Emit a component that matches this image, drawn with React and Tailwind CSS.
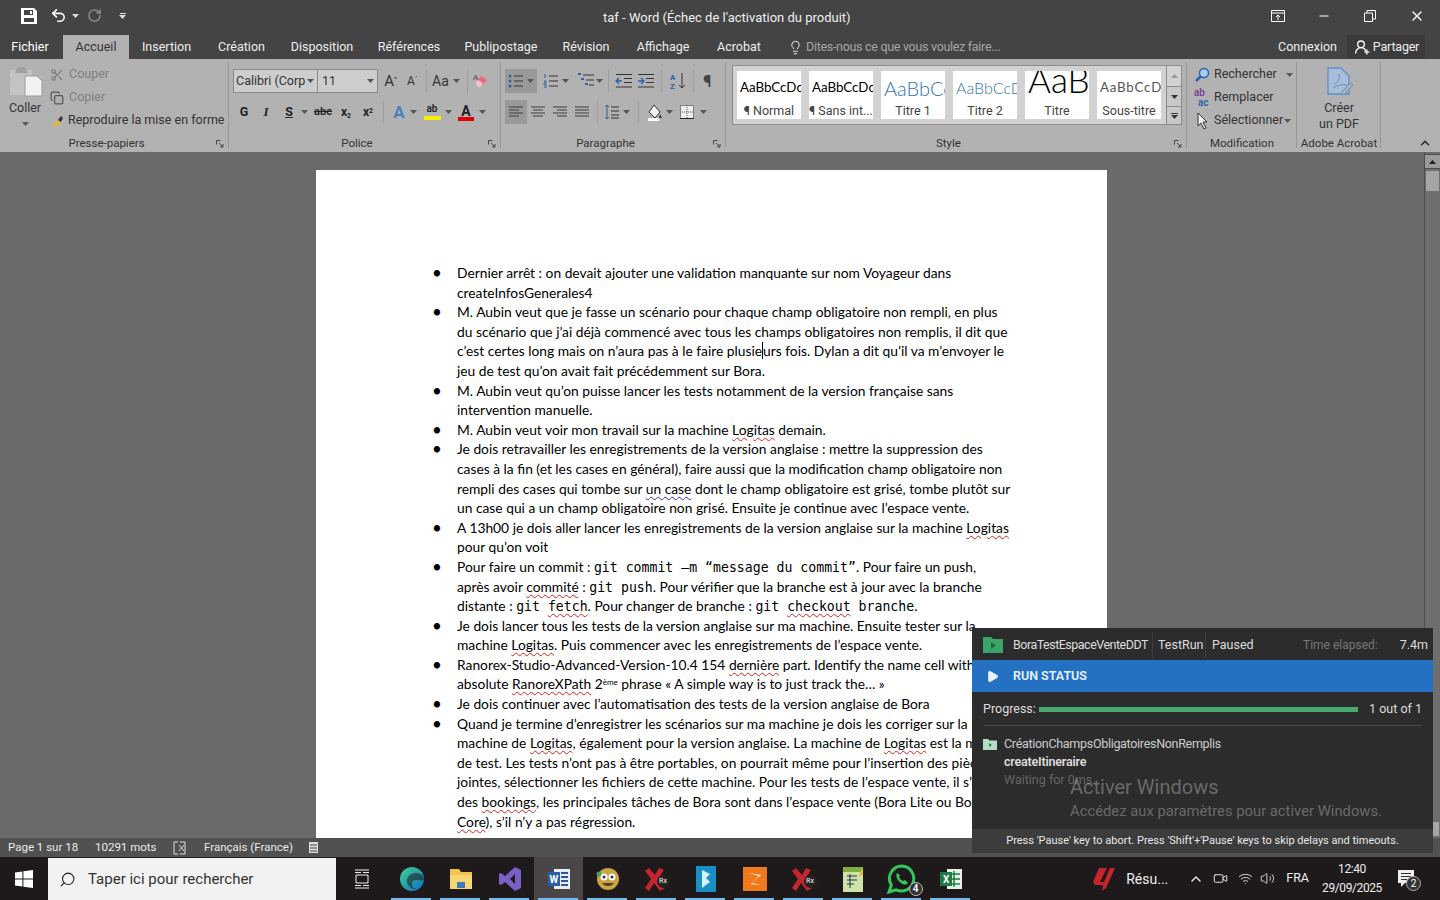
import React from "react";
import { Undo2, RotateCw, Scissors, Copy, Lightbulb, ChevronUp, Play, Search, Volume2, Wifi, Video, X as XIcon, Minus, UserRound, Plus } from "lucide-react";

const Caret = ({ c = "#555", className = "" }) => (
  <svg width="7" height="4" viewBox="0 0 7 4" className={className}><path d="M0 0h7L3.5 4z" fill={c} /></svg>
);
const Sep = ({ className = "" }) => <div className={"w-px h-[22px] bg-[#9c9c9c] " + className} />;

const Lines = ({ ys, stroke = "#3d3d3d", x1 = 1, x2 = 15 }) => (
  <svg width="16" height="16" viewBox="0 0 16 16">
    {ys.map((y, i) => <path key={i} d={`M${y[1] ?? x1} ${y[0]}H${y[2] ?? x2}`} stroke={stroke} strokeWidth="1" />)}
  </svg>
);

const Spell = ({ children, blue }) => (
  <span className={"underline decoration-wavy decoration-1 underline-offset-2 " + (blue ? "decoration-[#2a2ad0]" : "decoration-[#d81e1e]")}>{children}</span>
);
const Mono = ({ children }) => <span className="font-['DejaVu_Sans_Mono',monospace] text-[13.2px]">{children}</span>;

const items = [
  ["Dernier arrêt : on devait ajouter une validation manquante sur nom Voyageur dans", "createInfosGenerales4"],
  ["M. Aubin veut que je fasse un scénario pour chaque champ obligatoire non rempli, en plus", "du scénario que j’ai déjà commencé avec tous les champs obligatoires non remplis, il dit que", <>c’est certes long mais on n’aura pas à le faire plusie<span className="border-l border-black" />urs fois. Dylan a dit qu’il va m’envoyer le</>, "jeu de test qu’on avait fait précédemment sur Bora."],
  ["M. Aubin veut qu’on puisse lancer les tests notamment de la version française sans", "intervention manuelle."],
  [<>M. Aubin veut voir mon travail sur la machine <Spell>Logitas</Spell> demain.</>],
  ["Je dois retravailler les enregistrements de la version anglaise : mettre la suppression des", "cases à la fin (et les cases en général), faire aussi que la modification champ obligatoire non", <>rempli des cases qui tombe sur <Spell blue>un case</Spell> dont le champ obligatoire est grisé, tombe plutôt sur</>, "un case qui a un champ obligatoire non grisé. Ensuite je continue avec l’espace vente."],
  [<>A 13h00 je dois aller lancer les enregistrements de la version anglaise sur la machine <Spell>Logitas</Spell></>, "pour qu’on voit"],
  [<>Pour faire un commit : <Mono>git commit –m “message du commit”</Mono>. Pour faire un push,</>, <>après avoir <Spell>commité</Spell> : <Mono>git push</Mono>. Pour vérifier que la branche est à jour avec la branche</>, <>distante : <Mono>git <Spell>fetch</Spell></Mono>. Pour changer de branche : <Mono>git <Spell>checkout</Spell> branche</Mono>.</>],
  ["Je dois lancer tous les tests de la version anglaise sur ma machine. Ensuite tester sur la", <>machine <Spell>Logitas</Spell>. Puis commencer avec les enregistrements de l’espace vente.</>],
  [<>Ranorex-Studio-Advanced-Version-10.4 154 <Spell>dernière</Spell> part. Identify the name cell with an</>, <>absolute <Spell>RanoreXPath</Spell> 2<sup className="text-[8px] leading-none">ème</sup> phrase « A simple way is to just track the… »</>],
  ["Je dois continuer avec l’automatisation des tests de la version anglaise de Bora"],
  ["Quand je termine d’enregistrer les scénarios sur ma machine je dois les corriger sur la", <>machine de <Spell>Logitas</Spell>, également pour la version anglaise. La machine de <Spell>Logitas</Spell> est la machine</>, "de test. Les tests n’ont pas à être portables, on pourrait même pour l’insertion des pièces", "jointes, sélectionner les fichiers de cette machine. Pour les tests de l’espace vente, il s’agit", <>des <Spell>bookings</Spell>, les principales tâches de Bora sont dans l’espace vente (Bora Lite ou Bora</>, <><Spell>Core</Spell>), s’il n’y a pas régression.</>],
];

const Group = ({ w, label, launcher, children }) => (
  <div className={"relative flex flex-col shrink-0 h-full " + w}>
    <div className="flex-1 min-h-0">{children}</div>
    <div className={"h-[18px] pt-[2px] flex items-center justify-center text-[11.5px] text-[#333] " + (launcher ? "pr-[16px]" : "")}>{label}</div>
    {launcher && (
      <svg className="absolute right-[5px] bottom-[4px]" width="8" height="8" viewBox="0 0 8 8"><path d="M.5 .5h4M.5 .5v4M3 3l4 4M7 4v3H4" stroke="#444" fill="none" /></svg>
    )}
    <div className="absolute right-0 top-[3px] bottom-[4px] w-px bg-[#989898]" />
  </div>
);

const StyleTile = ({ sample, label, sampleClass }) => (
  <div className="w-[64px] h-[48px] bg-white flex flex-col items-center overflow-hidden shrink-0">
    <div className={"h-[32px] w-full shrink-0 pl-[3px] pt-[2px] overflow-hidden whitespace-nowrap flex items-center font-['Lato',sans-serif] " + sampleClass}>{sample}</div>
    <div className="text-[12.5px] leading-[16px] text-[#444] whitespace-nowrap">{label}</div>
  </div>
);

const TaskSlot = ({ children, active, running = true }) => (
  <div className={"w-[49px] h-full flex items-center justify-center relative " + (active ? "bg-[#4a4647]" : "")}>
    {children}
    {running && <div className="absolute bottom-0 left-[4px] right-[5px] h-[2px] bg-[#76b9ed]" />}
  </div>
);

const RxIcon = () => (
  <div className="relative w-[26px] h-[26px]">
    <svg width="26" height="26" viewBox="0 0 26 26"><path d="M5 2l6 7 4-7 5 2-6 9 7 9-5 3-6-8-5 8-4-3 6-9-6-8z" fill="#c4262e" /></svg>
    <div className="absolute right-0 bottom-[4px] w-[13px] h-[13px] rounded-full bg-[#222] text-white text-[7px] leading-[13px] text-center">Rx</div>
  </div>
);

export default function App() {
  return (
    <div className="relative w-[1440px] h-[900px] overflow-hidden flex flex-col bg-[#6a6a6a] font-['Roboto',sans-serif]">
      {/* Title bar */}
      <div className="h-[35px] shrink-0 bg-[#444444] flex items-center text-white">
        <div className="w-[603px] flex items-center pl-[21px] pb-[4px]">
          <svg width="16" height="16" viewBox="0 0 16 16"><path fillRule="evenodd" d="M0 0h13l3 3v13H0zM3 2v5h9V2zM3 10v4h10v-4z" fill="#fff" /><path d="M9 3h2v3H9z" fill="#fff" /></svg>
          <Undo2 size={17} strokeWidth={2.2} color="#fff" className="ml-[13px]" />
          <Caret c="#ddd" className="ml-[5px]" />
          <RotateCw size={15} strokeWidth={2.4} color="#8a8a8a" className="ml-[8px]" />
          <div className="ml-[17px] flex flex-col items-center gap-[1px]">
            <div className="w-[6px] h-px bg-[#ddd]" />
            <Caret c="#ddd" />
          </div>
        </div>
        <div className="text-[13px] pt-[1px] text-[#eee] whitespace-nowrap">taf - Word (Échec de l'activation du produit)</div>
        <div className="ml-auto flex items-center pr-[15px] pb-[4px]">
          <svg width="14" height="12" viewBox="0 0 14 12"><path d="M.5.5h13v11H.5zM.5 3h13M7 10V5M5 7l2-2 2 2" stroke="#fff" fill="none" /></svg>
          <Minus size={14} color="#fff" className="ml-[32px]" />
          <svg className="ml-[33px]" width="12" height="12" viewBox="0 0 12 12"><path d="M.5 3h8v8.500h-8zM3 3V.5h8.500V9H8.500" stroke="#fff" fill="none" /></svg>
          <XIcon size={16} color="#fff" className="ml-[33px]" />
        </div>
      </div>

      {/* Tabs */}
      <div className="h-[24px] shrink-0 bg-[#444444] flex items-stretch text-[12.5px] text-[#eee] whitespace-nowrap">
        <div className="w-[63px] pr-[3px] flex items-center justify-center pt-[1px] text-white">Fichier</div>
        <div className="w-[66px] flex items-center justify-center bg-[#b2b2b2] text-[#333]">Accueil</div>
        <div className="w-[75px] flex items-center justify-center">Insertion</div>
        <div className="w-[75px] flex items-center justify-center">Création</div>
        <div className="w-[86px] flex items-center justify-center">Disposition</div>
        <div className="w-[88px] flex items-center justify-center">Références</div>
        <div className="w-[96px] flex items-center justify-center">Publipostage</div>
        <div className="w-[74px] flex items-center justify-center">Révision</div>
        <div className="w-[80px] flex items-center justify-center">Affichage</div>
        <div className="w-[72px] flex items-center justify-center">Acrobat</div>
        <div className="flex items-center pl-[13px] text-[#a5a5a5]">
          <Lightbulb size={15} color="#eee" strokeWidth={1.5} />
          <span className="ml-[3px] tracking-[-0.3px]">Dites-nous ce que vous voulez faire...</span>
        </div>
        <div className="ml-auto flex items-stretch">
          <div className="flex items-center mr-[10px]">Connexion</div>
          <div className="w-[78px] mr-[15px] flex items-center justify-center gap-[4px] bg-[#3b3b3b]">
            <span className="relative flex">
              <UserRound size={16} color="#fff" />
              <Plus size={8} color="#fff" strokeWidth={3} className="absolute -right-[2px] -bottom-[1px]" />
            </span>
            <span className="tracking-[-0.2px]">Partager</span>
          </div>
        </div>
      </div>

      {/* Ribbon */}
      <div className="h-[93px] shrink-0 bg-[#b2b2b2] flex text-[12.5px] text-[#333] whitespace-nowrap">
        {/* Clipboard */}
        <Group w="w-[229px]" label="Presse-papiers" launcher>
          <div className="flex">
            <div className="w-[50px] shrink-0 flex flex-col items-center pt-[5px]">
              <svg width="36" height="33" viewBox="0 0 36 33">
                <path d="M3 6h22v25H3z" fill="#c3c3c3" />
                <path d="M9 6l2-3h6l2 3 2 3H8z" fill="#9f9f9f" />
                <path d="M18 12h12l5 5v15H18z" fill="#f2f2f2" stroke="#999" />
              </svg>
              <div className="mt-[2px] text-[12.5px] leading-[18px] text-[#333]">Coller</div>
              <Caret c="#555" className="mt-[5px]" />
            </div>
            <div className="pt-[4px] text-[12.5px]">
              <div className="h-[23px] flex items-center text-[#808080]"><Scissors size={14} color="#7a7a7a" className="mr-[5px]" />Couper</div>
              <div className="h-[23px] flex items-center text-[#808080]"><Copy size={14} color="#555" className="mr-[5px]" />Copier</div>
              <div className="h-[23px] flex items-center text-[#333]">
                <svg width="14" height="14" viewBox="0 0 14 14" className="mr-[4px]"><path d="M2 12L8 6l3 2-5 5z" fill="#e3b341" /><path d="M8 6l3-4 2 2-2 4z" fill="#333" /></svg>
                Reproduire la mise en forme
              </div>
            </div>
          </div>
        </Group>

        {/* Police */}
        <Group w="w-[272px]" label="Police" launcher>
          <div className="pt-[10px] pl-[4px]">
            <div className="h-[24px] flex items-center">
              <div className="w-[85px] h-[24px] bg-[#cdcdcd] border border-[#8a8a8a] flex items-center justify-between pl-[2px] pr-[3px] text-[12.5px]">Calibri (Corp<Caret /></div>
              <div className="w-[60px] h-[24px] bg-[#cdcdcd] border border-[#8a8a8a] border-l-0 flex items-center justify-between pl-[4px] pr-[3px] text-[12.5px]">11<Caret /></div>
              <div className="w-[23px] ml-[1px] text-center text-[15px] leading-none">A<sup className="text-[7px]">^</sup></div>
              <div className="w-[21px] text-center text-[12px] leading-none">A<sup className="text-[7px]">ˇ</sup></div>
              <Sep className="ml-[3px]" />
              <div className="ml-[5px] text-[14px]">Aa</div>
              <Caret className="ml-[4px]" />
              <Sep className="ml-[7px]" />
              <svg className="ml-[4px]" width="18" height="18" viewBox="0 0 18 18"><path d="M3 11l6-7 6 4-6 7H6z" fill="#e46a80" /><path d="M3 11l3-3 5 3-2 4H6z" fill="#f0c4cd" /><text x="1" y="8" fontSize="8" fill="#444">A</text></svg>
            </div>
            <div className="h-[24px] mt-[7px] flex items-center text-[#222]">
              <div className="w-[22px] text-center font-bold text-[12.5px]">G</div>
              <div className="w-[22px] text-center italic font-['Liberation_Serif',serif] font-bold text-[13px]">I</div>
              <div className="w-[22px] ml-[1px] text-center underline font-bold text-[12.5px]">S</div>
              <Caret className="ml-[1px] mr-[3px]" />
              <div className="w-[24px] text-center line-through text-[11px] font-semibold">abc</div>
              <div className="w-[22px] text-center font-bold text-[12px]">x<sub className="text-[7px]">2</sub></div>
              <div className="w-[22px] text-center font-bold text-[12px]">x<sup className="text-[7px]">2</sup></div>
              <Sep className="ml-[4px]" />
              <div className="w-[22px] ml-[4px] text-center text-[17px] leading-none text-[#4a7fc0] font-bold">A</div>
              <Caret />
              <div className="w-[24px] ml-[3px] flex flex-col items-center leading-none">
                <span className="text-[10px] h-[12px] font-semibold">ab</span>
                <span className="w-[17px] h-[4px] bg-[#f0f000]" />
              </div>
              <Caret className="ml-[1px]" />
              <div className="w-[24px] ml-[2px] flex flex-col items-center leading-none">
                <span className="text-[14px] h-[13px] font-bold">A</span>
                <span className="w-[16px] h-[4px] bg-[#e00000]" />
              </div>
              <Caret className="ml-[1px]" />
            </div>
          </div>
        </Group>

        {/* Paragraphe */}
        <Group w="w-[225px]" label="Paragraphe" launcher>
          <div className="pt-[10px] pl-[4px]">
            <div className="h-[24px] flex items-center">
              <div className="w-[32px] h-[24px] bg-[#999999] flex items-center pl-[3px] gap-[3px]">
                <svg width="16" height="16" viewBox="0 0 16 16"><circle cx="2" cy="3" r="1.500" fill="#2b5fa8" /><circle cx="2" cy="8" r="1.500" fill="#2b5fa8" /><circle cx="2" cy="13" r="1.500" fill="#2b5fa8" /><path d="M6 3h9M6 8h9M6 13h9" stroke="#333" /></svg>
                <Caret />
              </div>
              <svg className="ml-[6px]" width="16" height="16" viewBox="0 0 16 16"><path d="M2 1v4M1 8h2v2H1v2h3M1 14h3" stroke="#2b5fa8" fill="none" /><path d="M6 3h9M6 8h9M6 13h9" stroke="#333" /></svg>
              <Caret className="ml-[3px]" />
              <svg className="ml-[8px]" width="18" height="16" viewBox="0 0 18 16"><path d="M1 1h3M4 6h3M8 11h3" stroke="#2b5fa8" strokeWidth="2" /><path d="M6 2h11M9 7h8M12 12h5" stroke="#333" /></svg>
              <Caret className="ml-[1px]" />
              <Sep className="ml-[5px]" />
              <svg className="ml-[6px]" width="18" height="14" viewBox="0 0 18 14"><path d="M1 .5h16M9 4.500h8M9 8.500h8M1 13h16" stroke="#333" /><path d="M7 7H1M4 4L1 7l3 3" stroke="#2b5fa8" strokeWidth="1.300" fill="none" /></svg>
              <svg className="ml-[4px]" width="18" height="14" viewBox="0 0 18 14"><path d="M1 .5h16M9 4.500h8M9 8.500h8M1 13h16" stroke="#333" /><path d="M1 7h6M4 4l3 3-3 3" stroke="#2b5fa8" strokeWidth="1.300" fill="none" /></svg>
              <Sep className="ml-[6px]" />
              <svg className="ml-[8px]" width="16" height="18" viewBox="0 0 16 18"><text x="0" y="8" fontSize="8" fontWeight="700" fill="#2b5fa8">A</text><text x="0" y="17" fontSize="8" fontWeight="700" fill="#2b5fa8">Z</text><path d="M12 1v15M9 13l3 3 3-3" stroke="#333" fill="none" /></svg>
              <Sep className="ml-[7px]" />
              <div className="ml-[9px] text-[17px] leading-none font-bold text-[#444]">¶</div>
            </div>
            <div className="h-[24px] mt-[7px] flex items-center">
              <div className="w-[22px] h-[24px] bg-[#999999] flex items-center justify-center"><Lines ys={[[3], [6, 1, 11], [9], [12, 1, 11]]} /></div>
              <div className="w-[22px] flex justify-center"><Lines ys={[[3], [6, 3, 13], [9], [12, 3, 13]]} /></div>
              <div className="w-[22px] flex justify-center"><Lines ys={[[3], [6, 5, 15], [9], [12, 5, 15]]} /></div>
              <div className="w-[22px] flex justify-center"><Lines ys={[[3], [6], [9], [12]]} /></div>
              <Sep className="ml-[4px]" />
              <svg className="ml-[6px]" width="16" height="16" viewBox="0 0 16 16"><path d="M3 1v14M1 3l2-2 2 2M1 13l2 2 2-2" stroke="#2b5fa8" fill="none" /><path d="M7 3h8M7 7h8M7 11h8M7 14h8" stroke="#333" /></svg>
              <Caret className="ml-[3px]" />
              <Sep className="ml-[8px]" />
              <svg className="ml-[7px]" width="17" height="17" viewBox="0 0 17 17"><path d="M8 1l6 7-5 6-6-6z" fill="#eee" stroke="#333" /><path d="M14 10l2 4h-3z" fill="#333" /><path d="M2 14h11v3H2z" fill="#fff" /></svg>
              <Caret className="ml-[3px]" />
              <svg className="ml-[7px]" width="14" height="14" viewBox="0 0 14 14"><path d="M.5.5h13v13H.5z" fill="#eee" stroke="#333" strokeDasharray="1 1" /><path d="M7 0v14M0 7h14" stroke="#555" strokeDasharray="1 1" /><path d="M0 13.500h14" stroke="#222" /></svg>
              <Caret className="ml-[6px]" />
            </div>
          </div>
        </Group>

        {/* Styles */}
        <Group w="w-[461px]" label="Style" launcher>
          <div className="pt-[6px] pl-[6px]">
            <div className="w-[450px] h-[60px] bg-[#d2d2d2] border border-[#8c8c8c] flex">
              <div className="flex-1 flex gap-[8px] items-center pl-[4px]">
                <StyleTile sample="AaBbCcDc" label="¶ Normal" sampleClass="text-[13.3px] text-black" />
                <StyleTile sample="AaBbCcDc" label="¶ Sans int..." sampleClass="text-[13.3px] text-black" />
                <StyleTile sample="AaBbCc" label="Titre 1" sampleClass="text-[20px] font-light text-[#2e74b5]" />
                <StyleTile sample="AaBbCcD" label="Titre 2" sampleClass="text-[16px] font-light text-[#2e74b5]" />
                <StyleTile sample={<span className="relative -top-[9px]">AaB</span>} label="Titre" sampleClass="text-[35px] font-light text-black" />
                <StyleTile sample="AaBbCcD" label="Sous-titre" sampleClass="text-[13.3px] tracking-[0.8px] text-[#555]" />
              </div>
              <div className="w-[15px] border-l border-[#8c8c8c] flex flex-col">
                <div className="h-[20px] flex items-center justify-center"><Caret c="#999" className="rotate-180" /></div>
                <div className="h-[20px] border-t border-[#8c8c8c] flex items-center justify-center bg-[#c8c8c8]"><Caret c="#333" /></div>
                <div className="h-[18px] border-t border-[#8c8c8c] flex flex-col items-center justify-center gap-[1px] bg-[#c8c8c8]"><div className="w-[7px] h-px bg-[#333]" /><Caret c="#333" /></div>
              </div>
            </div>
          </div>
        </Group>

        {/* Modification */}
        <Group w="w-[110px]" label="Modification">
          <div className="pt-[4px] pl-[7px]">
            <div className="h-[23px] flex items-center">
              <svg width="16" height="16" viewBox="0 0 16 16" className="mr-[4px]"><circle cx="10" cy="6" r="4.500" fill="#a9cdf0" stroke="#2b63a8" strokeWidth="1.500" /><path d="M7 9l-5 5" stroke="#2b63a8" strokeWidth="2.500" /></svg>
              Rechercher<Caret className="ml-[9px]" />
            </div>
            <div className="h-[23px] flex items-center">
              <span className="w-[20px] flex flex-col text-[10px] leading-[10px] font-semibold"><span className="text-[#7a3f9e]">ab</span><span className="text-[#2b63a8] pl-[4px]">ac</span></span>
              Remplacer
            </div>
            <div className="h-[23px] flex items-center">
              <svg width="16" height="18" viewBox="0 0 16 18" className="mr-[4px]"><path d="M4 1v13l3-3 3 6 2-1-3-6h4z" fill="#eee" stroke="#333" /></svg>
              Sélectionner<Caret className="ml-[1px]" />
            </div>
          </div>
        </Group>

        {/* Adobe */}
        <Group w="w-[84px]" label="Adobe Acrobat">
          <div className="flex flex-col items-center pt-[8px]">
            <svg width="28" height="30" viewBox="0 0 28 30">
              <path d="M3 1h13l8 8v18H3z" fill="#a9bdd6" stroke="#5b8fd0" strokeWidth="1.300" />
              <path d="M9 17c4-1 6-5 5-10M8 21c5-3 10-4 14-3" stroke="#5b8fd0" fill="none" />
              <path d="M17 25l8-9 3 2-8 9-4 1z" fill="#b2b2b2" stroke="#5b8fd0" />
            </svg>
            <div className="mt-[3px] leading-[16px] text-center text-[12.5px]">Créer<br />un PDF</div>
          </div>
        </Group>
        <div className="flex-1 flex items-end justify-end pr-[8px] pb-[2px]">
          <ChevronUp size={14} strokeWidth={3} color="#333" />
        </div>
      </div>

      {/* Document area */}
      <div className="flex-1 min-h-0 flex overflow-hidden bg-[#6a6a6a]">
        <div className="flex-1 pl-[316px] pt-[18px]">
          <div className="w-[791px] bg-white pt-[93px] pl-[116px] pb-[40px] text-black font-['Lato',sans-serif] text-[13.8px] leading-[19.6px] whitespace-nowrap">
            {items.map((lines, i) => (
              <div key={i} className="flex">
                <div className="w-[25px] text-[17px] leading-[19px] text-black">•</div>
                <div>{lines.map((l, j) => <div key={j} className="h-[19.6px]">{l}</div>)}</div>
              </div>
            ))}
          </div>
        </div>
        <div className="w-[16px] h-full bg-[#6e6e6e] border-l border-[#4c4c4c] flex flex-col items-center">
          <div className="w-full h-[15px] mt-[2px] border-y border-[#4c4c4c] bg-[#9a9a9a] flex items-center justify-center"><Caret c="#222" className="rotate-180" /></div>
          <div className="w-[13px] h-[20px] mt-[2px] bg-[#a5a5a5]" />
          <div className="mt-auto mb-[2px] w-[13px] h-[14px] bg-[#a5a5a5]" />
        </div>
      </div>

      {/* Status bar */}
      <div className="h-[19px] shrink-0 bg-[#515151] flex items-center text-[11.5px] text-[#eaeaea] whitespace-nowrap pl-[8px]">
        <span className="w-[87px]">Page 1 sur 18</span>
        <span className="w-[77px]">10291 mots</span>
        <svg width="15" height="14" viewBox="0 0 15 14"><path d="M6 1H2v12h4M8 1h5v12H8" stroke="#ddd" fill="none" /><path d="M7 4l5 6M12 4l-5 6" stroke="#ddd" /></svg>
        <span className="ml-[17px] w-[103px]">Français (France)</span>
        <svg width="13" height="13" viewBox="0 0 13 13"><path d="M2 1h9v11H2z" fill="#ddd" /><path d="M3 4h7M3 7h7M3 10h7" stroke="#444" /></svg>
      </div>

      {/* Taskbar */}
      <div className="h-[43px] shrink-0 bg-[#1e1a1b] flex items-stretch text-white whitespace-nowrap">
        <div className="w-[48px] flex items-center justify-center">
          <svg width="18" height="18" viewBox="0 0 18 18"><path d="M0 2.500l7.400-1V8.500H0zM8.400 1.300L18 0v8.500H8.400zM0 9.500h7.400v7L0 15.500zM8.400 9.500H18V18l-9.600-1.300z" fill="#fff" /></svg>
        </div>
        <div className="w-[288px] mt-[1px] bg-[#f2f2f2] flex items-center pl-[8px] text-[#333] text-[15px]">
          <Search size={17} color="#222" strokeWidth={1.5} className="-scale-x-100 ml-[3px]" />
          <span className="ml-[12px] pt-[1px]">Taper ici pour rechercher</span>
        </div>
        <div className="w-[51px] flex items-center justify-center">
          <svg width="16" height="20" viewBox="0 0 16 20"><path d="M1 1h14M1 19h14M2 6h12v8H2zM1 3.500h6M9 3.500h6M1 16.500h6M9 16.500h6" stroke="#eee" fill="none" /></svg>
        </div>
        <TaskSlot>
          <svg width="26" height="26" viewBox="0 0 26 26">
            <defs><linearGradient id="edgeg" x1="0" y1="0" x2="1" y2="1"><stop offset="0" stopColor="#45d18e" /><stop offset="1" stopColor="#0a6fc2" /></linearGradient></defs>
            <circle cx="13" cy="13" r="12" fill="url(#edgeg)" />
            <path d="M25 14c0-5-4-7-8-7-5 0-9 3-9 8 0 5 5 9 10 8-4 0-5-3-5-6 0-2 2-3 4-3 3 0 4 1 8 0z" fill="#1e1a1b" opacity=".55" />
          </svg>
        </TaskSlot>
        <TaskSlot>
          <svg width="24" height="22" viewBox="0 0 24 22"><path d="M1 1h9l2 3h11v17H1z" fill="#f3c44f" /><path d="M1 7h22v14H1z" fill="#f7d774" /><path d="M8 14h8v6H8z" fill="#3a7cc2" /></svg>
        </TaskSlot>
        <TaskSlot>
          <svg width="24" height="26" viewBox="0 0 24 26"><path d="M17 1l6 3v18l-6 3-10-9-4 3-2-1V8l2-1 4 3zM17 8l-5 5 5 5z" fill="#7a5fc4" fillRule="evenodd" /></svg>
        </TaskSlot>
        <TaskSlot active>
          <svg width="24" height="24" viewBox="0 0 24 24"><path d="M7 2h16v20H7z" fill="#e8edf5" /><path d="M14 6h7M14 10h7M14 14h7M14 18h7" stroke="#2b5797" strokeWidth="2" /><path d="M1 5h12v14H1z" fill="#2b5fa8" /><text x="2.500" y="16" fontSize="10" fontWeight="700" fill="#fff">W</text></svg>
        </TaskSlot>
        <TaskSlot>
          <svg width="24" height="24" viewBox="0 0 24 24"><circle cx="12" cy="12" r="11" fill="#c9a545" /><circle cx="8" cy="10" r="3.500" fill="#fff" /><circle cx="16" cy="10" r="3.500" fill="#fff" /><circle cx="8" cy="10" r="1.500" fill="#333" /><circle cx="16" cy="10" r="1.500" fill="#333" /><path d="M6 16c3 4 9 4 12 0z" fill="#5b3a1a" /><circle cx="3" cy="7" r="2.500" fill="#4aa356" /></svg>
        </TaskSlot>
        <TaskSlot><RxIcon /></TaskSlot>
        <TaskSlot>
          <svg width="22" height="28" viewBox="0 0 22 28"><path d="M1 1h20v26H1z" fill="#1b8fc4" /><path d="M7 5v18l8-6-4-4 4-4z" fill="#d8f0fa" /></svg>
        </TaskSlot>
        <TaskSlot>
          <svg width="26" height="26" viewBox="0 0 26 26"><path d="M1 1h24v24H1z" fill="#f07a1a" /><path d="M7 7l12 2-9 8 9 2-10-1 8-8z" fill="#fff" /></svg>
        </TaskSlot>
        <TaskSlot><RxIcon /></TaskSlot>
        <TaskSlot>
          <svg width="22" height="28" viewBox="0 0 22 28"><path d="M1 2h20v25H1z" fill="#cfe3a8" /><path d="M1 2h20v5H1z" fill="#7fb03f" /><path d="M5 11h10M5 15h10M5 19h7M8 9v14" stroke="#234" /><path d="M16 12l5-10v8z" fill="#d9c24a" /></svg>
        </TaskSlot>
        <TaskSlot>
          <div className="relative">
            <svg width="30" height="30" viewBox="0 0 30 30"><path d="M15 2a12.500 12.500 0 0 0-10.700 19L2 28l7-2.200A12.500 12.500 0 1 0 15 2z" fill="none" stroke="#34c759" strokeWidth="3" /><path d="M10 9c-2 3 1 8 4 10s5 2 7 0l-3-3-2 1c-2-1-3-2-4-4l1-2z" fill="#34c759" /></svg>
            <div className="absolute -right-[6px] -bottom-[2px] w-[14px] h-[14px] rounded-full bg-[#333] border border-[#bbb] text-[10px] leading-[12px] text-center font-semibold">4</div>
          </div>
        </TaskSlot>
        <TaskSlot>
          <svg width="24" height="24" viewBox="0 0 24 24"><path d="M8 2h15v20H8z" fill="#e6f0e9" /><path d="M10 7h11M10 12h11M10 17h11M15 4v16" stroke="#1f7a44" strokeWidth="1.500" /><path d="M1 5h12v14H1z" fill="#1d7a46" /><text x="4" y="16" fontSize="10" fontWeight="700" fill="#fff">X</text></svg>
        </TaskSlot>

        <div className="ml-auto flex items-center">
          <svg width="26" height="26" viewBox="0 0 26 26"><path d="M9 2h8l-7 14 4 0 6-14h5l-9 20-4 3 1-6H5l-2-3z" fill="#c5252c" /></svg>
          <span className="ml-[10px] pt-[2px] w-[50px] text-[14px] text-[#eee]">Résu...</span>
          <ChevronUp size={16} color="#eee" className="ml-[12px]" />
          <Video size={15} color="#eee" strokeWidth={1.5} className="ml-[9px]" />
          <Wifi size={15} color="#ddd" strokeWidth={1.5} className="ml-[10px]" />
          <Volume2 size={15} color="#ddd" strokeWidth={1.5} className="ml-[7px]" />
          <span className="ml-[11px] text-[12.5px] text-[#eee]">FRA</span>
          <div className="ml-[7px] w-[72px] pt-[1px] text-center text-[12px] leading-[19px] tracking-[-0.4px] text-[#eee]">12:40<br />29/09/2025</div>
          <div className="relative ml-[10px] mr-[26px]">
            <svg width="16" height="18" viewBox="0 0 16 18"><path d="M0 0h16v13H7l-4 4v-4H0z" fill="#eee" /><path d="M3 3.500h10M3 6.500h10M3 9.500h6" stroke="#333" /></svg>
            <div className="absolute -right-[7px] -bottom-[3px] w-[15px] h-[15px] rounded-full bg-[#333] border border-[#aaa] text-[10px] leading-[13px] text-center">2</div>
          </div>
        </div>
      </div>

      {/* Floating Ranorex progress window */}
      <div className="absolute left-[972px] top-[628px] w-[461px] h-[225px] bg-[#2c2c2c] flex flex-col text-[12.5px] text-[#eee] whitespace-nowrap">
        <div className="h-[32px] shrink-0 pt-[2px] bg-[#2c2c2c] flex items-center pl-[11px] pr-[5px]">
          <svg width="20" height="16" viewBox="0 0 20 16"><path d="M0 0h8l2 2h10v14H0z" fill="#3ba468" /><path d="M8 5l5 3.500-5 3.500z" fill="#1e6b40" /></svg>
          <span className="ml-[10px] w-[134px] tracking-[-0.5px] text-[#ddd]">BoraTestEspaceVenteDDT</span>
          <div className="w-px h-[26px] bg-[#3f3f3f] ml-[5px]" />
          <span className="ml-[5px] w-[42px] text-[#ddd]">TestRun</span>
          <div className="w-px h-[26px] bg-[#3f3f3f] ml-[5px]" />
          <span className="ml-[6px] text-[#ddd]">Paused</span>
          <span className="ml-auto text-[12px] text-[#777]">Time elapsed:</span>
          <span className="ml-[22px] text-[#ddd]">7.4m</span>
        </div>
        <div className="h-[32px] shrink-0 pt-[1px] bg-[#2470c2] flex items-center pl-[14px] font-semibold text-[12.5px] text-white">
          <Play size={13} fill="#eaf2fb" color="#eaf2fb" />
          <span className="ml-[14px] text-[#e8f1fb]">RUN STATUS</span>
        </div>
        <div className="mx-[11px] h-[33px] shrink-0 pt-[1px] flex items-center border-b border-[#4a4a4a] mt-[1px]">
          <span className="w-[57px] text-[#ddd]">Progress:</span>
          <div className="w-[323px] h-[5px] bg-[#47a970]" />
          <span className="ml-[11px] text-[#ddd]">1 out of 1</span>
        </div>
        <div className="pl-[11px] pt-[9px] flex flex-col">
          <div className="flex items-center h-[18px]">
            <svg width="14" height="11" viewBox="0 0 14 11"><path d="M0 0h5l1.500 1.500H14V11H0z" fill="#b5dcc5" /><path d="M6 4l3 2-3 2z" fill="#2f7e4e" /></svg>
            <span className="ml-[7px] tracking-[-0.3px] text-[#ccc]">CréationChampsObligatoiresNonRemplis</span>
          </div>
          <div className="ml-[21px] h-[18px] flex items-center font-semibold tracking-[-0.2px] text-[#ddd]">createItineraire</div>
          <div className="ml-[21px] h-[18px] flex items-center text-[#666]">Waiting for 0ms.</div>
        </div>
        <div className="mt-auto h-[24px] shrink-0 bg-[#3c3c3c] flex items-center justify-center text-[11px] text-[#e8e8e8]">
          Press 'Pause' key to abort. Press 'Shift'+'Pause' keys to skip delays and timeouts.
        </div>
      </div>

      {/* Activation watermark */}
      <div className="absolute left-[1070px] top-[774px] text-white/30 whitespace-nowrap">
        <div className="text-[20px] leading-[26px]">Activer Windows</div>
        <div className="text-[14.8px] leading-[20px] mt-[1px]">Accédez aux paramètres pour activer Windows.</div>
      </div>
    </div>
  );
}
